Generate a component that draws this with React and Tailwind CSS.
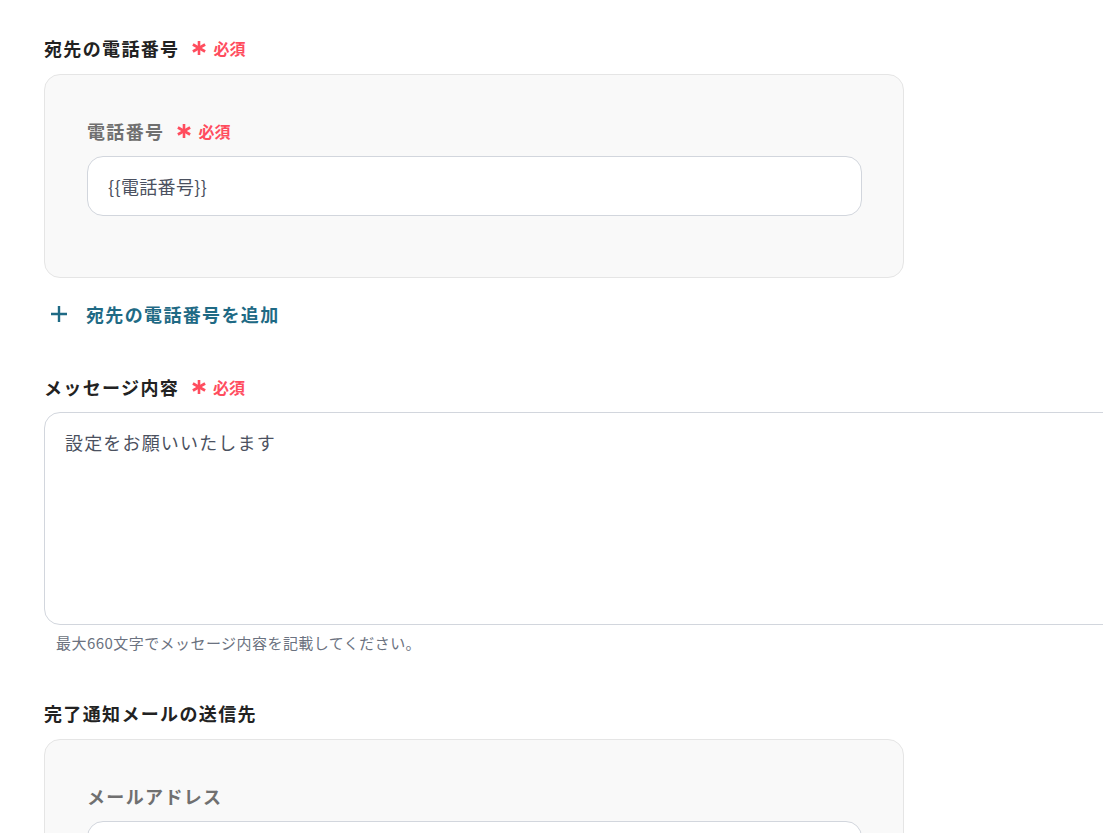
import React from 'react';

const font = { fontFamily: '"Noto Sans CJK JP", "Noto Sans", sans-serif' };

const Asterisk = () => (
    <svg width="16" height="16" viewBox="0 0 16 16" className="shrink-0">
        <g stroke="#ff4d5e" strokeWidth="2.6" strokeLinecap="butt">
            <line x1="8" y1="1" x2="8" y2="15" />
            <line x1="1.9" y1="4.5" x2="14.1" y2="11.5" />
            <line x1="1.9" y1="11.5" x2="14.1" y2="4.5" />
        </g>
    </svg>
);

const Required = () => (
    <span className="flex items-center gap-[6px] ml-3">
        <Asterisk />
        <span className="text-[16px] font-bold text-[#ff4d5e]">必須</span>
    </span>
);

const Label = ({ children, required, muted }) => (
    <div className="flex items-center h-6">
        <span className={`text-[18px] leading-6 font-bold tracking-[0.075em] ${muted ? 'text-[#707070]' : 'text-[#222]'}`}>{children}</span>
        {required && <Required />}
    </div>
);

const Panel = ({ label, required, value }) => (
    <div className="w-[860px] rounded-2xl border border-[#e5e5e5] bg-[#f9f9f9] pl-[42px] pr-[41px] pt-[44px] pb-[61px]">
        <Label muted required={required}>{label}</Label>
        <div className="mt-[13px] h-[60px] rounded-2xl border border-[#d2d6dd] bg-white flex items-center px-5">
            <span className="text-[18px] text-[#4b5160] tracking-[0.02em]">{value}</span>
        </div>
    </div>
);

const App = () => {
    return (
        <div className="min-h-screen bg-white overflow-hidden pl-[44px] pt-[36px]" style={font}>
            <Label required>宛先の電話番号</Label>
            <div className="mt-[14px]">
                <Panel label="電話番号" required value="{{電話番号}}" />
            </div>

            <button className="mt-[24px] flex items-center h-6 text-[#1f6a85] font-bold">
                <svg width="18" height="18" viewBox="0 0 18 18" className="ml-[6px]">
                    <path d="M9 1v16M1 9h16" stroke="#1f6a85" strokeWidth="2.4" />
                </svg>
                <span className="ml-[18px] text-[18px] leading-6 tracking-[0.075em]">宛先の電話番号を追加</span>
            </button>

            <div className="mt-[49px]">
                <Label required>メッセージ内容</Label>
            </div>
            <div className="mt-[13px] w-[1090px] h-[213px] rounded-2xl border border-[#d2d6dd] bg-white px-5 pt-[16px]">
                <span className="text-[18px] text-[#4b5160] tracking-[0.065em]">設定をお願いいたします</span>
            </div>
            <p className="mt-[8px] ml-3 text-[15px] leading-5 text-[#6b7280] tracking-[0.03em]">最大660文字でメッセージ内容を記載してください。</p>

            <div className="mt-[48px]">
                <Label>完了通知メールの送信先</Label>
            </div>
            <div className="mt-[14px]">
                <Panel label="メールアドレス" value="" />
            </div>
        </div>
    );
};

export default App;
